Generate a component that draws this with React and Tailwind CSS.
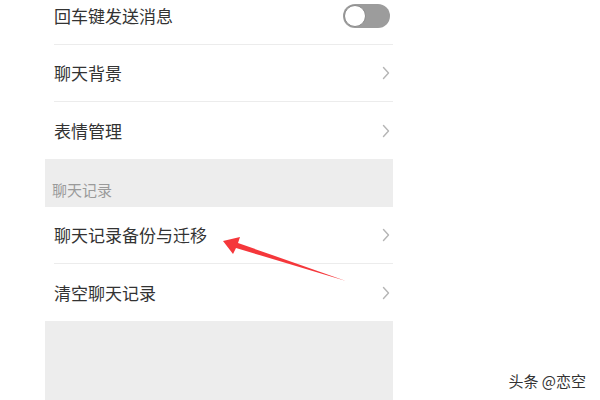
import React from 'react';

function Chevron() {
  return (
    <svg width="8" height="14" viewBox="0 0 8 14" className="shrink-0">
      <polyline points="1.5,1.5 6.5,7 1.5,12.5" fill="none" stroke="#b5b5b5" strokeWidth="1.4" strokeLinecap="round" strokeLinejoin="round" />
    </svg>
  );
}

function Toggle() {
  return (
    <div className="w-[47px] h-[24px] rounded-full bg-[#9c9c9c] p-[1px] flex items-center">
      <div className="w-[22px] h-[22px] rounded-full bg-white border border-[#8a8a8a]" />
    </div>
  );
}

function Row({ label, right, divider }) {
  return (
    <div className="bg-white pl-[9px]">
      <div className={`h-[57px] flex items-center justify-between pr-[3px] ${divider ? 'border-b border-[#ececec]' : ''}`}>
        <span className="text-[17px] text-[#333]">{label}</span>
        {right}
      </div>
    </div>
  );
}

export default function App() {
  return (
    <div className="relative w-[600px] h-[400px] overflow-hidden bg-white" style={{ fontFamily: '"Noto Sans CJK SC", "Noto Sans", sans-serif' }}>
      <div className="ml-[45px] w-[348px] h-full flex flex-col bg-[#ededed]">
        <div className="-mt-[12px]">
          <Row label="回车键发送消息" right={<Toggle />} divider />
          <Row label="聊天背景" right={<Chevron />} divider />
          <Row label="表情管理" right={<Chevron />} />
        </div>
        <div className="h-[48px] flex items-end pb-[6px] pl-[7px]">
          <span className="text-[15px] text-[#9a9a9a]">聊天记录</span>
        </div>
        <Row label="聊天记录备份与迁移" right={<Chevron />} divider />
        <Row label="清空聊天记录" right={<Chevron />} />
        <div className="flex-1" />
      </div>

      {/* red annotation arrow */}
      <svg className="absolute inset-0 pointer-events-none" width="600" height="400" viewBox="0 0 600 400">
        <polygon points="223,241 240,237 238,243 346,281 236,248 233,254" fill="#f5373b" />
      </svg>

      <div className="absolute right-[12px] bottom-[8px] text-[15px] text-[#333] bg-white px-[2px]">
        头条 @恋空
      </div>
    </div>
  );
}
